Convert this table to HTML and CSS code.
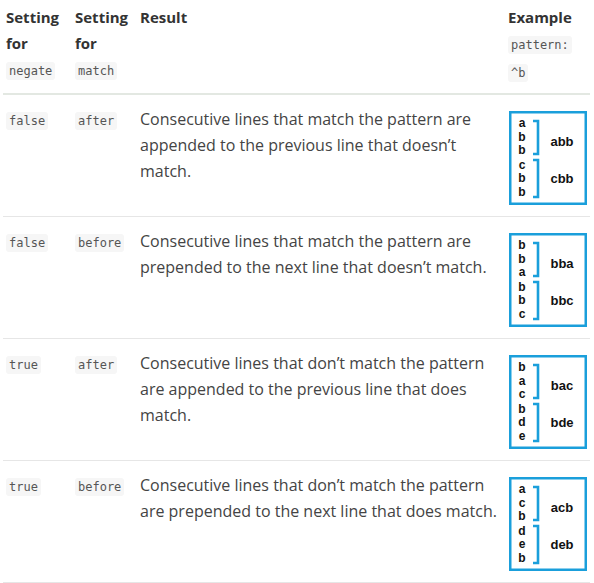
FILE: index.html
```html
<!DOCTYPE html>
<html>
<head>
<meta charset="utf-8">
<link rel="stylesheet" href="styles.css">
</head>
<body>
<table class="tbl">
  <colgroup>
    <col class="c1"><col class="c2"><col class="c3"><col class="c4">
  </colgroup>
  <thead>
    <tr>
      <th>Setting for <code>negate</code></th>
      <th>Setting for <code>match</code></th>
      <th>Result</th>
      <th>Example <code>pattern:</code> <code>^b</code></th>
    </tr>
  </thead>
  <tbody>
    <tr>
      <td><code>false</code></td>
      <td><code>after</code></td>
      <td>Consecutive lines that match the pattern are appended to the previous line that doesn’t match.</td>
      <td class="ex">
        <svg width="78" height="94" viewBox="0 0 78 94">
          <rect x="1.25" y="1.25" width="75.5" height="91.5" class="frame"/>
          <g class="lt"><text x="13" y="16">a</text><text x="13" y="30">b</text><text x="13" y="43">b</text><text x="13" y="58">c</text><text x="13" y="71">b</text><text x="13" y="85">b</text></g>
          <path class="br" d="M24 10H29V43H24M24 49H29V86H24"/>
          <g class="lb"><text x="53" y="35">abb</text><text x="53" y="72">cbb</text></g>
        </svg>
      </td>
    </tr>
    <tr>
      <td><code>false</code></td>
      <td><code>before</code></td>
      <td>Consecutive lines that match the pattern are prepended to the next line that doesn’t match.</td>
      <td class="ex">
        <svg width="78" height="94" viewBox="0 0 78 94">
          <rect x="1.25" y="1.25" width="75.5" height="91.5" class="frame"/>
          <g class="lt"><text x="13" y="16">b</text><text x="13" y="30">b</text><text x="13" y="43">a</text><text x="13" y="58">b</text><text x="13" y="71">b</text><text x="13" y="85">c</text></g>
          <path class="br" d="M24 10H29V43H24M24 49H29V86H24"/>
          <g class="lb"><text x="53" y="35">bba</text><text x="53" y="72">bbc</text></g>
        </svg>
      </td>
    </tr>
    <tr>
      <td><code>true</code></td>
      <td><code>after</code></td>
      <td>Consecutive lines that don’t match the pattern are appended to the previous line that does match.</td>
      <td class="ex">
        <svg width="78" height="94" viewBox="0 0 78 94">
          <rect x="1.25" y="1.25" width="75.5" height="91.5" class="frame"/>
          <g class="lt"><text x="13" y="16">b</text><text x="13" y="30">a</text><text x="13" y="43">c</text><text x="13" y="58">b</text><text x="13" y="71">d</text><text x="13" y="85">e</text></g>
          <path class="br" d="M24 10H29V43H24M24 49H29V86H24"/>
          <g class="lb"><text x="53" y="35">bac</text><text x="53" y="72">bde</text></g>
        </svg>
      </td>
    </tr>
    <tr>
      <td><code>true</code></td>
      <td><code>before</code></td>
      <td>Consecutive lines that don’t match the pattern are prepended to the next line that does match.</td>
      <td class="ex">
        <svg width="78" height="94" viewBox="0 0 78 94">
          <rect x="1.25" y="1.25" width="75.5" height="91.5" class="frame"/>
          <g class="lt"><text x="13" y="16">a</text><text x="13" y="30">c</text><text x="13" y="43">b</text><text x="13" y="58">d</text><text x="13" y="71">e</text><text x="13" y="85">b</text></g>
          <path class="br" d="M24 10H29V43H24M24 49H29V86H24"/>
          <g class="lb"><text x="53" y="35">acb</text><text x="53" y="72">deb</text></g>
        </svg>
      </td>
    </tr>
  </tbody>
</table>
</body>
</html>
```
FILE: styles.css
```css
html, body {
  margin: 0;
  padding: 0;
  background: #fff;
}
body {
  font-family: "Open Sans", "Liberation Sans", sans-serif;
  font-size: 16px;
  line-height: 26px;
  color: #444;
}
.tbl {
  margin-left: 3px;
  width: 587px;
  border-collapse: collapse;
  table-layout: fixed;
}
.c1 { width: 69px; }
.c2 { width: 65px; }
.c3 { width: 368px; }
.c4 { width: 85px; }
th {
  text-align: left;
  vertical-align: top;
  font-size: 15px;
  font-weight: 700;
  color: #333;
  padding: 4px 3px 7px;
  border-bottom: 2px solid #e3e8e2;
}
td {
  vertical-align: top;
  padding: 11px 3px 11px;
  border-bottom: 1px solid #e6e6e6;
}
td.ex svg {
  display: block;
  margin-top: 5px;
  margin-left: 1px;
}
code {
  font-family: "DejaVu Sans Mono", "Liberation Mono", monospace;
  font-size: 12px;
  font-weight: 400;
  color: #555;
  background: #f6f6f6;
  border-radius: 3px;
  padding: 2px 3px;
}
.frame {
  fill: #fff;
  stroke: #1a9fdb;
  stroke-width: 2.5;
}
.br {
  fill: none;
  stroke: #1a9fdb;
  stroke-width: 2.6;
}
.lt text {
  font-family: "Liberation Sans", Arial, sans-serif;
  font-weight: 700;
  font-size: 12px;
  fill: #111;
  text-anchor: middle;
}
.lb text {
  font-family: "Liberation Sans", Arial, sans-serif;
  font-weight: 700;
  font-size: 13px;
  fill: #111;
  text-anchor: middle;
}
```
